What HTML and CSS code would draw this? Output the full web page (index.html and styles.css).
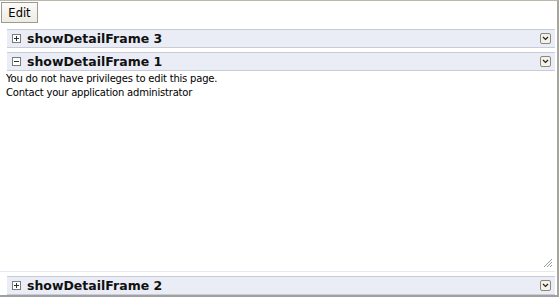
FILE: index.html
```html
<!DOCTYPE html>
<html>
<head>
<meta charset="utf-8">
<link rel="stylesheet" href="styles.css">
</head>
<body>
<div class="page">
  <div class="toolbar"><button class="btn">Edit</button></div>
  <div class="frame">
    <div class="hdr">
      <span class="tog"><svg width="9" height="9" viewBox="0 0 9 9"><rect x="0.5" y="0.5" width="8" height="8" fill="#fff" stroke="#7a7a7a"/><path d="M2 4.5h5M4.5 2v5" stroke="#333" stroke-width="1"/></svg></span>
      <span class="title">showDetailFrame 3</span>
      <span class="menu"><svg width="11" height="11" viewBox="0 0 11 11"><rect x="0.5" y="0.5" width="10" height="10" rx="1.5" fill="#f4f1e8" stroke="#8a877c"/><path d="M3 4l2.5 2.5L8 4" fill="none" stroke="#222" stroke-width="1.2"/></svg></span>
    </div>
  </div>
  <div class="frame open">
    <div class="hdr">
      <span class="tog"><svg width="9" height="9" viewBox="0 0 9 9"><rect x="0.5" y="0.5" width="8" height="8" fill="#fff" stroke="#7a7a7a"/><path d="M2 4.5h5" stroke="#333" stroke-width="1"/></svg></span>
      <span class="title">showDetailFrame 1</span>
      <span class="menu"><svg width="11" height="11" viewBox="0 0 11 11"><rect x="0.5" y="0.5" width="10" height="10" rx="1.5" fill="#f4f1e8" stroke="#8a877c"/><path d="M3 4l2.5 2.5L8 4" fill="none" stroke="#222" stroke-width="1.2"/></svg></span>
    </div>
  </div>
  <div class="body">
    <p class="msg">You do not have privileges to edit this page.<br>Contact your application administrator</p>
    <span class="grip"><svg width="10" height="10" viewBox="0 0 10 10"><path d="M9 1L1 9M9 4L4 9M9 7L7 9" stroke="#999" stroke-width="1"/></svg></span>
  </div>
  <div class="frame last">
    <div class="hdr">
      <span class="tog"><svg width="9" height="9" viewBox="0 0 9 9"><rect x="0.5" y="0.5" width="8" height="8" fill="#fff" stroke="#7a7a7a"/><path d="M2 4.5h5M4.5 2v5" stroke="#333" stroke-width="1"/></svg></span>
      <span class="title">showDetailFrame 2</span>
      <span class="menu"><svg width="11" height="11" viewBox="0 0 11 11"><rect x="0.5" y="0.5" width="10" height="10" rx="1.5" fill="#f4f1e8" stroke="#8a877c"/><path d="M3 4l2.5 2.5L8 4" fill="none" stroke="#222" stroke-width="1.2"/></svg></span>
    </div>
  </div>
</div>
</body>
</html>
```
FILE: styles.css
```css
html, body { margin: 0; padding: 0; background: #fff; }
body { font-family: "DejaVu Sans", "Liberation Sans", sans-serif; font-size: 10px; color: #000; }
.page {
  width: 557px; height: 294px;
  border-top: 1px solid #bcb7aa;
  border-right: 2px solid #a8a59c;
  border-bottom: 2px solid #a0a0a0;
  display: flex; flex-direction: column;
}
.toolbar { padding: 1px 0 0 1px; height: 26px; box-sizing: border-box; }
.btn {
  width: 37px; height: 21px; margin: 0; padding: 0;
  font-family: "DejaVu Sans", sans-serif; font-size: 11.5px; color: #000;
  background: linear-gradient(#fbfbf8, #ecebe4);
  border: 1px solid #9c9a92; border-radius: 0;
}
.frame { margin: 2px 2px 0 7px; }
.frame.open { margin-top: 4px; }
.hdr {
  height: 17px;
  background: #eaedf5;
  border-top: 1px solid #c8ccd6;
  border-bottom: 1px solid #c8ccd6;
  display: flex; align-items: center;
  padding: 0 4px 0 5px;
}
.tog { display: flex; width: 9px; height: 9px; }
.title { font-weight: bold; font-size: 12.5px; margin-left: 6px; flex: 1; color: #111; }
.menu { display: flex; }
.body { flex: 1; position: relative; border-bottom: 1px solid #e4e8f0; margin-right: 2px; }
.msg { margin: 1px 0 0 6px; line-height: 14px; font-size: 10px; letter-spacing: -0.2px; }
.grip { position: absolute; right: 2px; bottom: 3px; display: flex; }
.frame.last { margin-top: 4px; margin-bottom: 0; }
```
